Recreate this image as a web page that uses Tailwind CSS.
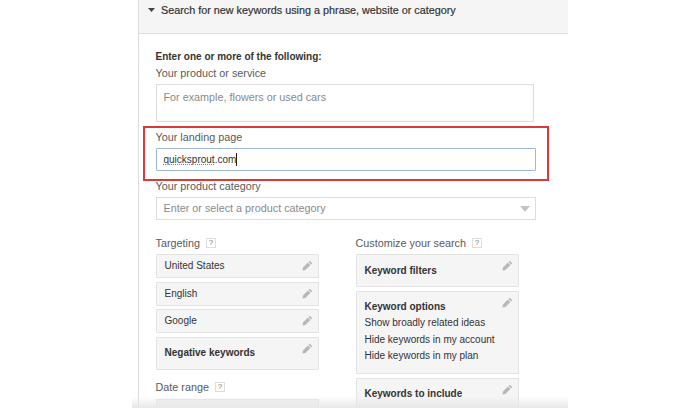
<!DOCTYPE html>
<html>
<head>
<meta charset="utf-8">
<script src="https://cdn.jsdelivr.net/npm/@tailwindcss/browser@4"></script>
</head>
<body class="bg-white">
<div class="relative w-[700px] h-[408px] overflow-hidden bg-white font-['Liberation_Sans',Arial,sans-serif] text-[10.800px] text-[#5a5a5a]">
  <div class="ml-[138px] w-[430px] h-[408px] border-l border-[#dcdcdc]">
    <div class="h-[34px] bg-[#f5f5f5] border-b border-[#dedede] pl-[9px] flex items-center gap-[6px] pb-[13px] text-[#333]">
      <svg width="7" height="4" viewBox="0 0 7 4"><path d="M0 0h7L3.500 4z" fill="#444"/></svg>
      <span class="text-[10.800px] leading-[14px] [-webkit-text-stroke:0.2px_#333]">Search for new keywords using a phrase, website or category</span>
    </div>
    <div class="pl-[16.500px] pt-[15px]">
      <div class="font-bold text-[#333] leading-[16px] h-[16px] text-[10px]">Enter one or more of the following:</div>
      <div class="leading-[16px] h-[16px]">Your product or service</div>
      <div class="mt-[3px] w-[378px] h-[38px] border border-[#ddd] pl-[7px] pt-[5px] leading-[14px] text-[#8a8a8a]">For example, flowers or used cars</div>
      <div class="mt-[7px] leading-[16px] h-[16px]">Your landing page</div>
      <div class="mt-[3px] w-[380px] h-[23px] border border-[#9db8d6] rounded-[1px] pl-[7px] flex items-center text-[#333] text-[10px]">
        <span class="underline decoration-dotted decoration-[#d0605e]">quicksprout</span><span>.com</span><span class="w-px h-[13px] bg-[#222]"></span>
      </div>
      <div class="mt-[7px] leading-[16px] h-[16px]">Your product category</div>
      <div class="mt-[3px] w-[380px] h-[23px] border border-[#ddd] pl-[7px] pr-[5px] flex items-center justify-between text-[#8a8a8a]">
        <span>Enter or select a product category</span>
        <svg width="10" height="6" viewBox="0 0 10 6"><path d="M0 0h10L5 6z" fill="#c4c4c4"/></svg>
      </div>
      <div class="mt-[15px] flex items-start">
        <div class="w-[200px] shrink-0">
          <div class="flex items-center gap-[6px] h-[16px]">Targeting <span class="w-[10px] h-[10px] border border-[#ddd] flex items-center justify-center text-[8px] text-[#777] bg-white">?</span></div>
          <div class="mt-[3px] flex flex-col gap-[3.500px] w-[163px] text-[#333] text-[10px]">
            <div class="h-[24px] bg-[#f5f5f5] border border-[#e3e3e3] rounded-[1px] pl-[8px] pr-[5px] flex items-center justify-between pb-[1px]">United States
              <svg class="self-start mt-[5px]" width="11" height="11" viewBox="0 0 12 12"><path d="M8.500.800l2.700 2.700-1.300 1.300-2.700-2.700zM6.500 2.800l2.700 2.700-5.500 5.500L.500 11.500l.500-3.200z" fill="#b8b8b8"/></svg>
            </div>
            <div class="h-[24px] bg-[#f5f5f5] border border-[#e3e3e3] rounded-[1px] pl-[8px] pr-[5px] flex items-center justify-between">English
              <svg class="self-start mt-[5px]" width="11" height="11" viewBox="0 0 12 12"><path d="M8.500.800l2.700 2.700-1.300 1.300-2.700-2.700zM6.500 2.800l2.700 2.700-5.500 5.500L.500 11.500l.500-3.200z" fill="#b8b8b8"/></svg>
            </div>
            <div class="h-[24px] bg-[#f5f5f5] border border-[#e3e3e3] rounded-[1px] pl-[8px] pr-[5px] flex items-center justify-between pb-[1px]">Google
              <svg class="self-start mt-[5px]" width="11" height="11" viewBox="0 0 12 12"><path d="M8.500.800l2.700 2.700-1.300 1.300-2.700-2.700zM6.500 2.800l2.700 2.700-5.500 5.500L.500 11.500l.500-3.200z" fill="#b8b8b8"/></svg>
            </div>
            <div class="h-[33px] bg-[#f5f5f5] border border-[#e3e3e3] rounded-[1px] pl-[8px] pr-[5px] flex items-center justify-between font-bold pb-[1px]">Negative keywords
              <svg class="self-start mt-[5px]" width="11" height="11" viewBox="0 0 12 12"><path d="M8.500.800l2.700 2.700-1.300 1.300-2.700-2.700zM6.500 2.800l2.700 2.700-5.500 5.500L.500 11.500l.500-3.200z" fill="#b8b8b8"/></svg>
            </div>
          </div>
          <div class="mt-[9.500px] flex items-center gap-[6px] h-[16px]">Date range <span class="w-[10px] h-[10px] border border-[#ddd] flex items-center justify-center text-[8px] text-[#777] bg-white">?</span></div>
          <div class="mt-[4px] w-[163px] h-[24px] bg-[#f0f0f0] border border-[#e3e3e3]"></div>
        </div>
        <div class="w-[164px] shrink-0">
          <div class="flex items-center gap-[6px] h-[16px]">Customize your search <span class="w-[10px] h-[10px] border border-[#ddd] flex items-center justify-center text-[8px] text-[#777] bg-white">?</span></div>
          <div class="mt-[3px] flex flex-col gap-[4px] w-[163px] text-[#333] text-[10px]">
            <div class="h-[33px] bg-[#f5f5f5] border border-[#e3e3e3] rounded-[1px] pl-[8px] pr-[5px] flex items-center justify-between font-bold">Keyword filters
              <svg class="self-start mt-[5px]" width="11" height="11" viewBox="0 0 12 12"><path d="M8.500.800l2.700 2.700-1.300 1.300-2.700-2.700zM6.500 2.800l2.700 2.700-5.500 5.500L.500 11.500l.500-3.200z" fill="#b8b8b8"/></svg>
            </div>
            <div class="h-[82.500px] bg-[#f5f5f5] border border-[#e3e3e3] rounded-[1px] pl-[8px] pr-[5px] flex justify-between items-start">
              <div class="leading-[16.600px] mt-[6.700px] whitespace-nowrap"><div class="font-bold">Keyword options</div><div>Show broadly related ideas</div><div>Hide keywords in my account</div><div>Hide keywords in my plan</div></div>
              <svg class="mt-[5px]" width="11" height="11" viewBox="0 0 12 12"><path d="M8.500.800l2.700 2.700-1.300 1.300-2.700-2.700zM6.500 2.800l2.700 2.700-5.500 5.500L.500 11.500l.500-3.200z" fill="#b8b8b8"/></svg>
            </div>
            <div class="h-[33px] bg-[#f5f5f5] border border-[#e3e3e3] rounded-[1px] pl-[8px] pr-[5px] flex items-center justify-between font-bold pb-[1px]">Keywords to include
              <svg class="self-start mt-[5px]" width="11" height="11" viewBox="0 0 12 12"><path d="M8.500.800l2.700 2.700-1.300 1.300-2.700-2.700zM6.500 2.800l2.700 2.700-5.500 5.500L.500 11.500l.500-3.200z" fill="#b8b8b8"/></svg>
            </div>
          </div>
        </div>
      </div>
    </div>
  </div>
  <div class="absolute left-[143px] top-[126px] w-[406px] h-[55px] border-[2.500px] border-[#d63a3a]"></div>
  <div class="absolute left-[132px] bottom-0 w-[436px] h-[12px] bg-gradient-to-b from-white/0 to-[#e8e8e8]"></div>
</div>
</body>
</html>
